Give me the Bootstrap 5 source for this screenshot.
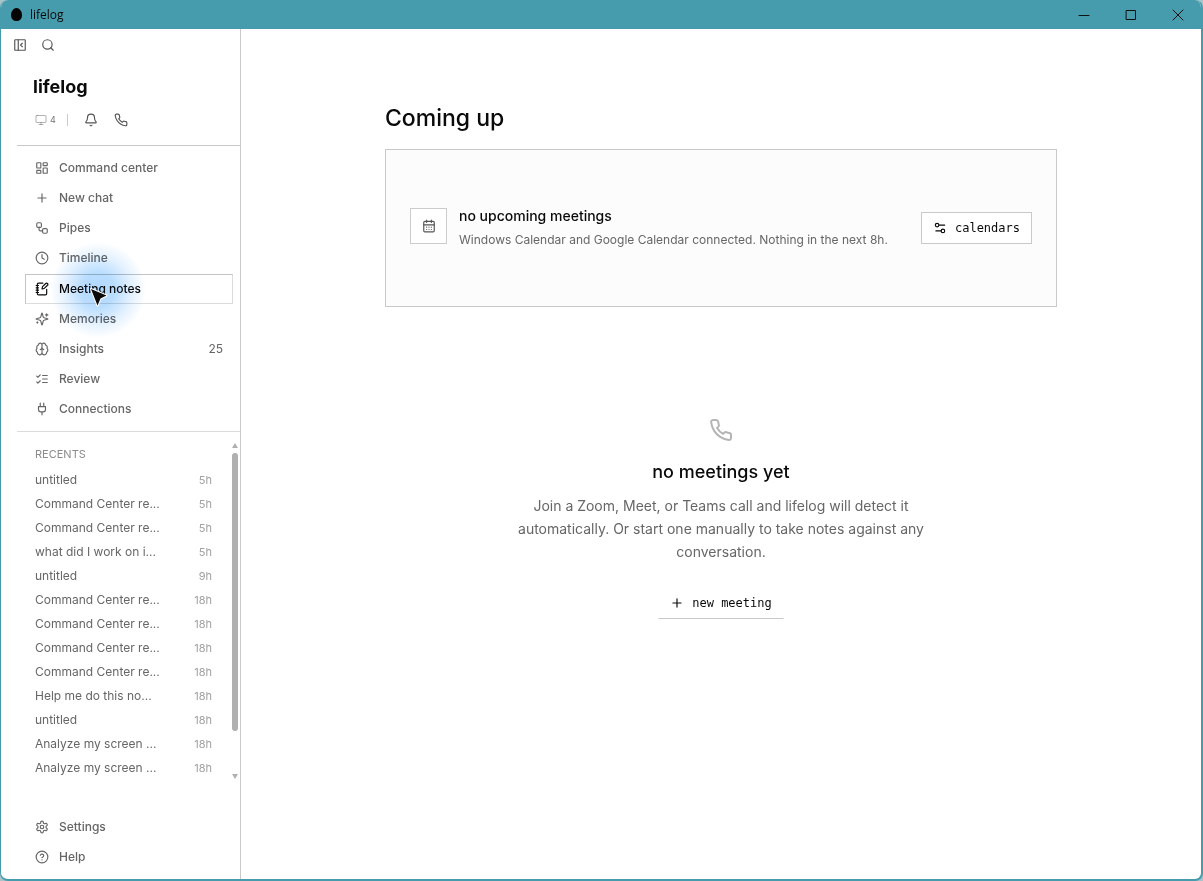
<!DOCTYPE html>
<html lang="en">
<head>
<meta charset="utf-8">
<meta name="viewport" content="width=device-width, initial-scale=1">
<title>lifelog</title>
<link href="https://cdn.jsdelivr.net/npm/bootstrap@5.3.0/dist/css/bootstrap.min.css" rel="stylesheet">
<style>
  :root { --teal: #469cad; --line: #c9c9c9; --muted-ink: #666; }
  body { font-family: Inter, "Liberation Sans", sans-serif; font-size: 12px; line-height: 20px; color: #0a0a0a; background: #a9c3c8; }
  .ico { width: 14px; height: 14px; flex: none; fill: none; stroke: currentColor; stroke-width: 2; stroke-linecap: round; stroke-linejoin: round; }
  .ico-12 { width: 12px; height: 12px; }
  .ico-24 { width: 24px; height: 24px; }
  .app-window { border: solid var(--teal); border-width: 0 2px 2px 1px; border-radius: 8px; background: #fff; overflow: hidden; }
  .title-bar { height: 29px; background: var(--teal); font-family: "Open Sans", sans-serif; font-size: 12px; padding-left: 10px; }
  .caption-btn { width: 47px; height: 28px; border: 0; background: none; color: #111; }
  .caption-btn svg { width: 12px; height: 12px; stroke-width: 1; }
  .plain-btn { border: 0; background: none; padding: 0; color: #555; display: flex; }
  .side-pane { width: 240px; border-right: 1px solid var(--line); color: var(--muted-ink); }
  .tool-row { height: 32px; padding-left: 12px; gap: 14px; }
  .brand-name { font-size: 18px; line-height: 28px; color: #0a0a0a; }
  .brand-block { padding: 12px 0 15px 32px; }
  .status-row { height: 20px; margin-top: 9px; padding-left: 2px; }
  .status-count { font-size: 9px; color: #777; margin-left: 3px; }
  .status-split { width: 1px; height: 12px; background: #ccc; margin: 0 16px 0 11px; }
  .rule { border-top: 1px solid var(--line); margin-left: 16px; }
  .rule.soft { border-color: #dcdcdc; }
  .nav-group { padding: 7px 7px 7px 24px; }
  .nav-item-row { height: 30px; padding: 0 9px; gap: 10px; border: 1px solid transparent; color: inherit; text-decoration: none; font-weight: 500; }
  .nav-item-row.current { margin-top: 1px; border-color: #c4c4c4 #dcdcdc #dcdcdc #c4c4c4; color: #0a0a0a; }
  .recent-list { padding: 12px 20px 0 34px; }
  .recent-head { font-size: 11px; color: #8b8b8b; margin-bottom: 4px; }
  .recent-row { height: 24px; color: inherit; text-decoration: none; }
  .recent-age { font-size: 11px; color: #a0a0a0; }
  .scroll-rail { width: 8px; padding: 11px 2px 0 0; margin-bottom: 1px; }
  .scroll-rail svg { width: 6px; height: 6px; fill: #b0b0b0; flex: none; }
  .scroll-thumb { width: 6px; border-radius: 3px; background: #b0b0b0; }
  .glow-spot { left: 24px; top: -33px; width: 96px; height: 96px; background: radial-gradient(closest-side, #b0d8ff 0, #b9ddff 35%, #e1f0ff 68%, #fff 100%); mix-blend-mode: multiply; pointer-events: none; }
  .pointer-mark { left: 63px; top: 12px; width: 20px; height: 22px; pointer-events: none; }
  .foot-group { padding: 28px 7px 7px 24px; }
  .page-col { max-width: 720px; padding: 73px 24px 24px; }
  .page-title { font-size: 23px; line-height: 32px; font-weight: 500; margin-bottom: 15px; }
  .event-panel { border: 1px solid var(--line); background: #fcfcfc; padding: 56px 24px; min-height: 158px; }
  .event-body { height: 44px; }
  .date-tile { width: 37px; height: 36px; border: 1px solid #ccc; background: #fff; color: #555; margin-top: 2px; }
  .event-title { font-size: 14px; line-height: 20px; font-weight: 500; }
  .event-sub { color: var(--muted-ink); line-height: 20px; margin-top: 4px; }
  .mono-btn { font-family: "DejaVu Sans Mono", monospace; font-size: 12px; line-height: 16px; height: 32px; padding: 0 11px; border: 1px solid #c9c9c9; background: #fff; color: #0a0a0a; gap: 8px; white-space: nowrap; }
  .mono-btn.quiet { border-color: transparent transparent #c9c9c9; }
  .empty-state { padding-top: 111px; }
  .empty-title { font-size: 18px; line-height: 28px; font-weight: 500; margin: 16px 0 8px; }
  .empty-text { font-size: 14px; line-height: 23px; color: var(--muted-ink); max-width: 420px; margin-bottom: 24px; }
</style>
</head>
<body>
<div class="app-window d-flex flex-column min-vh-100">
  <header class="title-bar d-flex align-items-center">
    <svg width="11" height="13" viewBox="0 0 11 13" aria-hidden="true"><path d="M5.500 0C8.500 0 11 3.500 11 7.200S8.500 13 5.500 13 0 10.800 0 7.200 2.500 0 5.500 0z" fill="#050505"/></svg>
    <span class="ms-2">lifelog</span>
    <div class="d-flex ms-auto">
      <button class="caption-btn" type="button" aria-label="Minimize"><svg class="ico" viewBox="0 0 12 12"><path d="M1 6.500h10"/></svg></button>
      <button class="caption-btn" type="button" aria-label="Maximize"><svg class="ico" viewBox="0 0 12 12"><path d="M1.500 1.500h9v9h-9z"/></svg></button>
      <button class="caption-btn" type="button" aria-label="Close"><svg class="ico" viewBox="0 0 12 12"><path d="M1 1l10 10M11 1L1 11"/></svg></button>
    </div>
  </header>

  <div class="d-flex flex-grow-1">
    <aside class="side-pane d-flex flex-column flex-shrink-0">
      <div class="tool-row d-flex align-items-center">
        <button class="plain-btn" type="button" aria-label="Collapse sidebar"><svg class="ico" viewBox="0 0 24 24"><rect x="3" y="3" width="18" height="18" rx="1"/><path d="M9 3v18M16 15l-3-3 3-3"/></svg></button>
        <button class="plain-btn" type="button" aria-label="Search"><svg class="ico" viewBox="0 0 24 24"><circle cx="11" cy="11" r="8"/><path d="m21 21-4.300-4.300"/></svg></button>
      </div>
      <div class="brand-block">
        <div class="brand-name fw-bold">lifelog</div>
        <div class="status-row d-flex align-items-center">
          <svg class="ico ico-12" stroke-opacity=".5" viewBox="0 0 24 24"><rect x="2" y="3" width="20" height="14" rx="2"/><path d="M8 21h8M12 17v4"/></svg>
          <span class="status-count">4</span>
          <span class="status-split"></span>
          <button class="plain-btn" type="button" aria-label="Notifications"><svg class="ico" viewBox="0 0 24 24"><path d="M10.300 21a2 2 0 0 0 3.400 0M3.300 15.300A1 1 0 0 0 4 17h16a1 1 0 0 0 .7-1.700C19.400 14 18 12.500 18 8A6 6 0 0 0 6 8c0 4.500-1.400 6-2.700 7.300"/></svg></button>
          <button class="plain-btn ms-3" type="button" aria-label="Calls"><svg class="ico" viewBox="0 0 24 24"><path d="M22 16.920v3a2 2 0 0 1-2.180 2 19.790 19.790 0 0 1-8.630-3.070 19.500 19.500 0 0 1-6-6 19.790 19.790 0 0 1-3.070-8.670A2 2 0 0 1 4.110 2h3a2 2 0 0 1 2 1.720 12.840 12.840 0 0 0 .7 2.810 2 2 0 0 1-.45 2.110L8.090 9.910a16 16 0 0 0 6 6l1.270-1.270a2 2 0 0 1 2.110-.45 12.840 12.840 0 0 0 2.810.7A2 2 0 0 1 22 16.920z"/></svg></button>
        </div>
      </div>
      <div class="rule"></div>

      <nav class="nav-group" aria-label="Main">
        <a href="#" class="nav-item-row d-flex align-items-center"><svg class="ico" viewBox="0 0 24 24"><rect x="3" y="3" width="7" height="9" rx="1"/><rect x="14" y="3" width="7" height="5" rx="1"/><rect x="14" y="12" width="7" height="9" rx="1"/><rect x="3" y="16" width="7" height="5" rx="1"/></svg>Command center</a>
        <a href="#" class="nav-item-row d-flex align-items-center"><svg class="ico" viewBox="0 0 24 24"><path d="M5 12h14M12 5v14"/></svg>New chat</a>
        <a href="#" class="nav-item-row d-flex align-items-center"><svg class="ico" viewBox="0 0 24 24"><rect x="3" y="3" width="8" height="8" rx="2"/><path d="M7 11v4a2 2 0 0 0 2 2h4"/><rect x="13" y="13" width="8" height="8" rx="2"/></svg>Pipes</a>
        <a href="#" class="nav-item-row d-flex align-items-center"><svg class="ico" viewBox="0 0 24 24"><circle cx="12" cy="12" r="10"/><path d="M12 6v6l4 2"/></svg>Timeline</a>
        <a href="#" class="nav-item-row current d-flex align-items-center position-relative" aria-current="page"><svg class="ico" viewBox="0 0 24 24"><path d="M13.400 2H6a2 2 0 0 0-2 2v16a2 2 0 0 0 2 2h12a2 2 0 0 0 2-2v-7.400M2 6h4M2 10h4M2 14h4M2 18h4"/><path d="M21.378 5.626a1 1 0 1 0-3.004-3.004l-5.010 5.012a2 2 0 0 0-.506.854l-.837 2.870a.5.5 0 0 0 .62.62l2.870-.837a2 2 0 0 0 .854-.506z"/></svg>Meeting notes
          <span class="glow-spot position-absolute z-1"></span>
          <svg class="pointer-mark position-absolute z-2" viewBox="0 0 20 22" aria-hidden="true"><path d="M2 2l15.500 6.500-6 3-3 7z" fill="#0a0a0a" stroke="#fff" stroke-width="2" stroke-linejoin="round" paint-order="stroke"/></svg></a>
        <a href="#" class="nav-item-row d-flex align-items-center"><svg class="ico" viewBox="0 0 24 24"><path d="M9.937 15.500A2 2 0 0 0 8.500 14.063l-6.135-1.582a.5.5 0 0 1 0-.962L8.500 9.936A2 2 0 0 0 9.937 8.500l1.582-6.135a.5.5 0 0 1 .963 0L14.063 8.500A2 2 0 0 0 15.500 9.937l6.135 1.581a.5.5 0 0 1 0 .964L15.500 14.063a2 2 0 0 0-1.437 1.437l-1.582 6.135a.5.5 0 0 1-.963 0zM20 3v4M22 5h-4M4 17v2M5 18H3"/></svg>Memories</a>
        <a href="#" class="nav-item-row d-flex align-items-center"><svg class="ico" viewBox="0 0 24 24"><path d="M12 5a3 3 0 1 0-5.997.125 4 4 0 0 0-2.526 5.770 4 4 0 0 0 .556 6.588A4 4 0 1 0 12 18zM12 5a3 3 0 1 1 5.997.125 4 4 0 0 1 2.526 5.770 4 4 0 0 1-.556 6.588A4 4 0 1 1 12 18zM15 13a4.500 4.500 0 0 1-3-4 4.500 4.500 0 0 1-3 4"/></svg>Insights<span class="ms-auto fw-normal">25</span></a>
        <a href="#" class="nav-item-row d-flex align-items-center"><svg class="ico" viewBox="0 0 24 24"><path d="m3 17 2 2 4-4M3 7l2 2 4-4M13 6h8M13 12h8M13 18h8"/></svg>Review</a>
        <a href="#" class="nav-item-row d-flex align-items-center"><svg class="ico" viewBox="0 0 24 24"><path d="M12 22v-5M9 8V2M15 8V2M18 8v5a4 4 0 0 1-4 4h-4a4 4 0 0 1-4-4V8z"/></svg>Connections</a>
      </nav>
      <div class="rule soft"></div>

      <section class="d-flex" aria-label="Recents">
        <div class="recent-list flex-grow-1">
          <div class="recent-head">RECENTS</div>
          <a href="#" class="recent-row d-flex align-items-center justify-content-between"><span>untitled</span><span class="recent-age">5h</span></a>
          <a href="#" class="recent-row d-flex align-items-center justify-content-between"><span>Command Center re...</span><span class="recent-age">5h</span></a>
          <a href="#" class="recent-row d-flex align-items-center justify-content-between"><span>Command Center re...</span><span class="recent-age">5h</span></a>
          <a href="#" class="recent-row d-flex align-items-center justify-content-between"><span>what did I work on i...</span><span class="recent-age">5h</span></a>
          <a href="#" class="recent-row d-flex align-items-center justify-content-between"><span>untitled</span><span class="recent-age">9h</span></a>
          <a href="#" class="recent-row d-flex align-items-center justify-content-between"><span>Command Center re...</span><span class="recent-age">18h</span></a>
          <a href="#" class="recent-row d-flex align-items-center justify-content-between"><span>Command Center re...</span><span class="recent-age">18h</span></a>
          <a href="#" class="recent-row d-flex align-items-center justify-content-between"><span>Command Center re...</span><span class="recent-age">18h</span></a>
          <a href="#" class="recent-row d-flex align-items-center justify-content-between"><span>Command Center re...</span><span class="recent-age">18h</span></a>
          <a href="#" class="recent-row d-flex align-items-center justify-content-between"><span>Help me do this no...</span><span class="recent-age">18h</span></a>
          <a href="#" class="recent-row d-flex align-items-center justify-content-between"><span>untitled</span><span class="recent-age">18h</span></a>
          <a href="#" class="recent-row d-flex align-items-center justify-content-between"><span>Analyze my screen ...</span><span class="recent-age">18h</span></a>
          <a href="#" class="recent-row d-flex align-items-center justify-content-between"><span>Analyze my screen ...</span><span class="recent-age">18h</span></a>
        </div>
        <div class="scroll-rail d-flex flex-column" aria-hidden="true">
          <svg viewBox="0 0 6 6"><path d="M3 0l3 5H0z"/></svg>
          <div class="flex-grow-1 pt-1"><div class="scroll-thumb" style="height:87%"></div></div>
          <svg viewBox="0 0 6 6"><path d="M0 1h6L3 6z"/></svg>
        </div>
      </section>

      <div class="foot-group mt-auto">
        <a href="#" class="nav-item-row d-flex align-items-center"><svg class="ico" viewBox="0 0 24 24"><path d="M12.220 2h-.44a2 2 0 0 0-2 2v.18a2 2 0 0 1-1 1.730l-.43.25a2 2 0 0 1-2 0l-.15-.08a2 2 0 0 0-2.730.73l-.22.38a2 2 0 0 0 .73 2.730l.15.1a2 2 0 0 1 1 1.720v.51a2 2 0 0 1-1 1.740l-.15.09a2 2 0 0 0-.73 2.730l.22.38a2 2 0 0 0 2.730.73l.15-.08a2 2 0 0 1 2 0l.43.25a2 2 0 0 1 1 1.730V20a2 2 0 0 0 2 2h.44a2 2 0 0 0 2-2v-.18a2 2 0 0 1 1-1.730l.43-.25a2 2 0 0 1 2 0l.15.08a2 2 0 0 0 2.730-.73l.22-.39a2 2 0 0 0-.73-2.730l-.15-.08a2 2 0 0 1-1-1.740v-.5a2 2 0 0 1 1-1.740l.15-.09a2 2 0 0 0 .73-2.730l-.22-.38a2 2 0 0 0-2.730-.73l-.15.08a2 2 0 0 1-2 0l-.43-.25a2 2 0 0 1-1-1.730V4a2 2 0 0 0-2-2z"/><circle cx="12" cy="12" r="3"/></svg>Settings</a>
        <a href="#" class="nav-item-row d-flex align-items-center"><svg class="ico" viewBox="0 0 24 24"><circle cx="12" cy="12" r="10"/><path d="M9.090 9a3 3 0 0 1 5.830 1c0 2-3 3-3 3M12 17h.01"/></svg>Help</a>
      </div>
    </aside>

    <main class="flex-grow-1">
      <div class="page-col mx-auto">
        <h1 class="page-title">Coming up</h1>
        <section class="event-panel d-flex align-items-center">
          <div class="event-body d-flex flex-grow-1">
            <div class="date-tile d-flex align-items-center justify-content-center flex-shrink-0"><svg class="ico" viewBox="0 0 24 24"><path d="M8 2v4M16 2v4M3 10h18M8 14h.01M12 14h.01M16 14h.01M8 18h.01M12 18h.01M16 18h.01"/><rect x="3" y="4" width="18" height="18" rx="2"/></svg></div>
            <div class="flex-grow-1 ms-2 ps-1">
              <h2 class="event-title mb-0">no upcoming meetings</h2>
              <p class="event-sub mb-0">Windows Calendar and Google Calendar connected. Nothing in the next 8h.</p>
            </div>
          </div>
          <button class="mono-btn d-flex align-items-center" type="button"><svg class="ico" viewBox="0 0 24 24"><path d="M20 7h-9M14 17H5"/><circle cx="17" cy="17" r="3"/><circle cx="7" cy="7" r="3"/></svg>calendars</button>
        </section>
        <section class="empty-state d-flex flex-column align-items-center text-center">
          <svg class="ico ico-24" stroke-opacity=".3" viewBox="0 0 24 24"><path d="M22 16.920v3a2 2 0 0 1-2.180 2 19.790 19.790 0 0 1-8.630-3.070 19.500 19.500 0 0 1-6-6 19.790 19.790 0 0 1-3.070-8.670A2 2 0 0 1 4.110 2h3a2 2 0 0 1 2 1.720 12.840 12.840 0 0 0 .7 2.810 2 2 0 0 1-.45 2.110L8.090 9.910a16 16 0 0 0 6 6l1.270-1.270a2 2 0 0 1 2.110-.45 12.840 12.840 0 0 0 2.810.7A2 2 0 0 1 22 16.920z"/></svg>
          <h2 class="empty-title">no meetings yet</h2>
          <p class="empty-text">Join a Zoom, Meet, or Teams call and lifelog will detect it automatically. Or start one manually to take notes against any conversation.</p>
          <button class="mono-btn quiet d-flex align-items-center" type="button"><svg class="ico" viewBox="0 0 24 24"><path d="M5 12h14M12 5v14"/></svg>new meeting</button>
        </section>
      </div>
    </main>
  </div>
</div>
<script src="https://cdn.jsdelivr.net/npm/bootstrap@5.3.0/dist/js/bootstrap.bundle.min.js"></script>
</body>
</html>
